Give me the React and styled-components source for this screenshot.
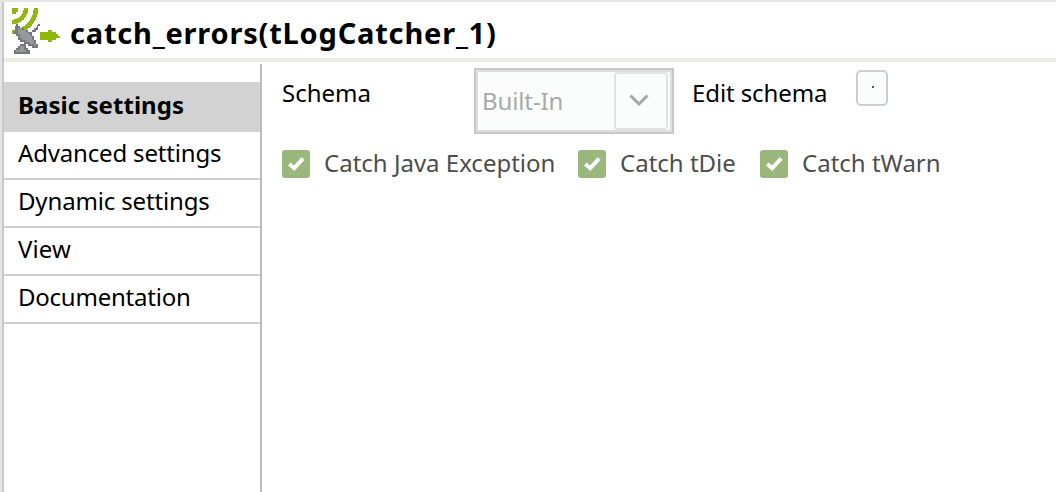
import React from "react";
import styled, { createGlobalStyle } from "styled-components";

const Global = createGlobalStyle`
  *{box-sizing:border-box}
  body{margin:0;background:#fff;font-family:"Noto Sans",sans-serif;font-size:24px;color:#000;overflow:hidden}
`;
const Panel = styled.div`
  height:492px;display:flex;border-top:2px solid #e6e6e6;
`;
const Edge = styled.div`
  width:4px;flex:none;background:#e4e4e4;border-right:2px solid #c8c8c8;
`;
const Content = styled.div`
  flex:1;display:flex;flex-direction:column;
`;
const Header = styled.header`
  height:60px;flex:none;display:flex;align-items:flex-start;padding:6px 0 0 8px;border-bottom:4px solid #e9efe2;
`;
const Title = styled.h1`
  margin:5px 0 0 10px;font-size:29px;line-height:40px;font-weight:700;white-space:nowrap;letter-spacing:.8px;
`;
const Body = styled.div`
  flex:1;display:flex;
`;
const Sidebar = styled.nav`
  width:258px;flex:none;margin-top:2px;padding-top:18px;border-right:2px solid #bdbdbd;
`;
const Tab = styled.div`
  height:${p => (p.$active ? 50 : 48)}px;
  padding-left:14px;line-height:${p => (p.$active ? 46 : 42)}px;
  background:${p => (p.$active ? "#d2d2d2" : "#fff")};
  border-bottom:2px solid #d2d2d2;
  font-weight:${p => (p.$active ? 700 : 400)};
  letter-spacing:${p => p.$track || 0}px;
`;
const Settings = styled.main`
  flex:1;padding:6px 0 0 20px;
`;
const Row = styled.div`
  display:flex;align-items:flex-start;height:${p => p.$h}px;
`;
const Label = styled.span`
  width:${p => p.$w}px;flex:none;line-height:34px;margin-top:${p => p.$top || 0}px;
  color:${p => p.$color || "#000"};white-space:nowrap;letter-spacing:${p => p.$track || 0}px;
`;
const Combo = styled.div`
  width:200px;height:66px;flex:none;margin-right:18px;display:flex;
  border:2px solid #c8c8c8;box-shadow:inset 0 0 0 2px #dedede;background:#fbfdfc;color:#a7abaa;
  padding:2px 4px 2px 6px;line-height:58px;
`;
const ComboText = styled.span`
  flex:1;letter-spacing:-.12px;
`;
const ComboButton = styled.div`
  width:54px;height:58px;border:2px solid #e2e3e2;border-radius:4px;display:flex;align-items:center;justify-content:center;
  padding:0 4px 3px 0;
`;
const EditButton = styled.div`
  width:32px;height:36px;margin-top:2px;border:2px solid #cdcdcd;border-radius:5px;background:#fbfdfc;
  display:flex;padding:14px 0 0 14px;
`;
const Dot = styled.i`
  width:2px;height:2px;background:#4a5a86;
`;
const Check = styled.div`
  width:28px;height:28px;flex:none;margin-right:14px;border-radius:3px;background:#9ab77c;
`;

const Tick = () => (
  <Check>
    <svg width="28" height="28" viewBox="0 0 28 28"><path d="M7.3 14L12.2 18.3L21.2 8.4" fill="none" stroke="#fff" strokeWidth="4" /></svg>
  </Check>
);

const Logo = () => (
  <svg width="48" height="48" viewBox="0 0 24 24" shapeRendering="crispEdges">
    <path fill="#8fb80c" d="M0 0h3v2h-1v1h-2z" />
    <path fill="none" stroke="#8fb80c" strokeWidth="2.3" d="M7 0A7 7 0 0 1 0 7M12 0A12 12 0 0 1 4 11.3M0 12H2" />
    <path fill="#8fb80c" d="M14 12h4v-1h2v1h2v1h1v1h1v1h-2v1h-2v1h-2v-1h-4z" />
    <path fill="#777980" d="M2 8h1v1h1v1h2v1h2v1h1v1h1v1h1v2h1v2h1v2h-3v-1h-2v-1h-2v-1h-2v-1h-1v-2h-1v-1h-1z" />
    <path fill="#98989b" d="M3 10h2v1h2v1h1v1h1v1h1v2h1v2h1v1h-1v-1h-2v-1h-2v-1h-2v-1h-1v-2h-1z" />
    <path fill="#777980" d="M13 8h1v1h-1v2h-1v1h-2v1h-2v-1h2v-1h1v-1h1zM4 18h3v2h1v1h1v2h-8v-2h1v-1h1v-1h1z" />
    <path fill="#98989b" d="M4 19h2v2h1v1h-5v-1h2z" />
  </svg>
);

const tabs = [
  { text: "Basic settings", track: 0.05, active: true },
  { text: "Advanced settings", track: -0.17 },
  { text: "Dynamic settings", track: -0.15 },
  { text: "View", track: 0.1 },
  { text: "Documentation", track: -0.23 },
];

const checks = [
  { text: "Catch Java Exception", w: 254 },
  { text: "Catch tDie", w: 140 },
  { text: "Catch tWarn", w: 150 },
];

export default function App() {
  return (
    <>
      <Global />
      <Panel>
        <Edge />
        <Content>
          <Header><Logo /><Title>catch_errors(tLogCatcher_1)</Title></Header>
          <Body>
            <Sidebar>
              {tabs.map(t => <Tab key={t.text} $active={t.active} $track={t.track}>{t.text}</Tab>)}
            </Sidebar>
            <Settings>
              <Row $h={82}>
                <Label $w={192} $top={8}>Schema</Label>
                <Combo>
                  <ComboText>Built-In</ComboText>
                  <ComboButton>
                    <svg width="20" height="14" viewBox="0 0 20 14"><path d="M1.5 2.5L10 11L18.5 2.5" fill="none" stroke="#a6a8a7" strokeWidth="3" /></svg>
                  </ComboButton>
                </Combo>
                <Label $w={164} $top={8} $track={-0.1}>Edit schema</Label>
                <EditButton><Dot /></EditButton>
              </Row>
              <Row $h={30}>
                {checks.map(c => (
                  <React.Fragment key={c.text}>
                    <Tick />
                    <Label $w={c.w} $top={-4} $color="#4d4d4d">{c.text}</Label>
                  </React.Fragment>
                ))}
              </Row>
            </Settings>
          </Body>
        </Content>
      </Panel>
    </>
  );
}
